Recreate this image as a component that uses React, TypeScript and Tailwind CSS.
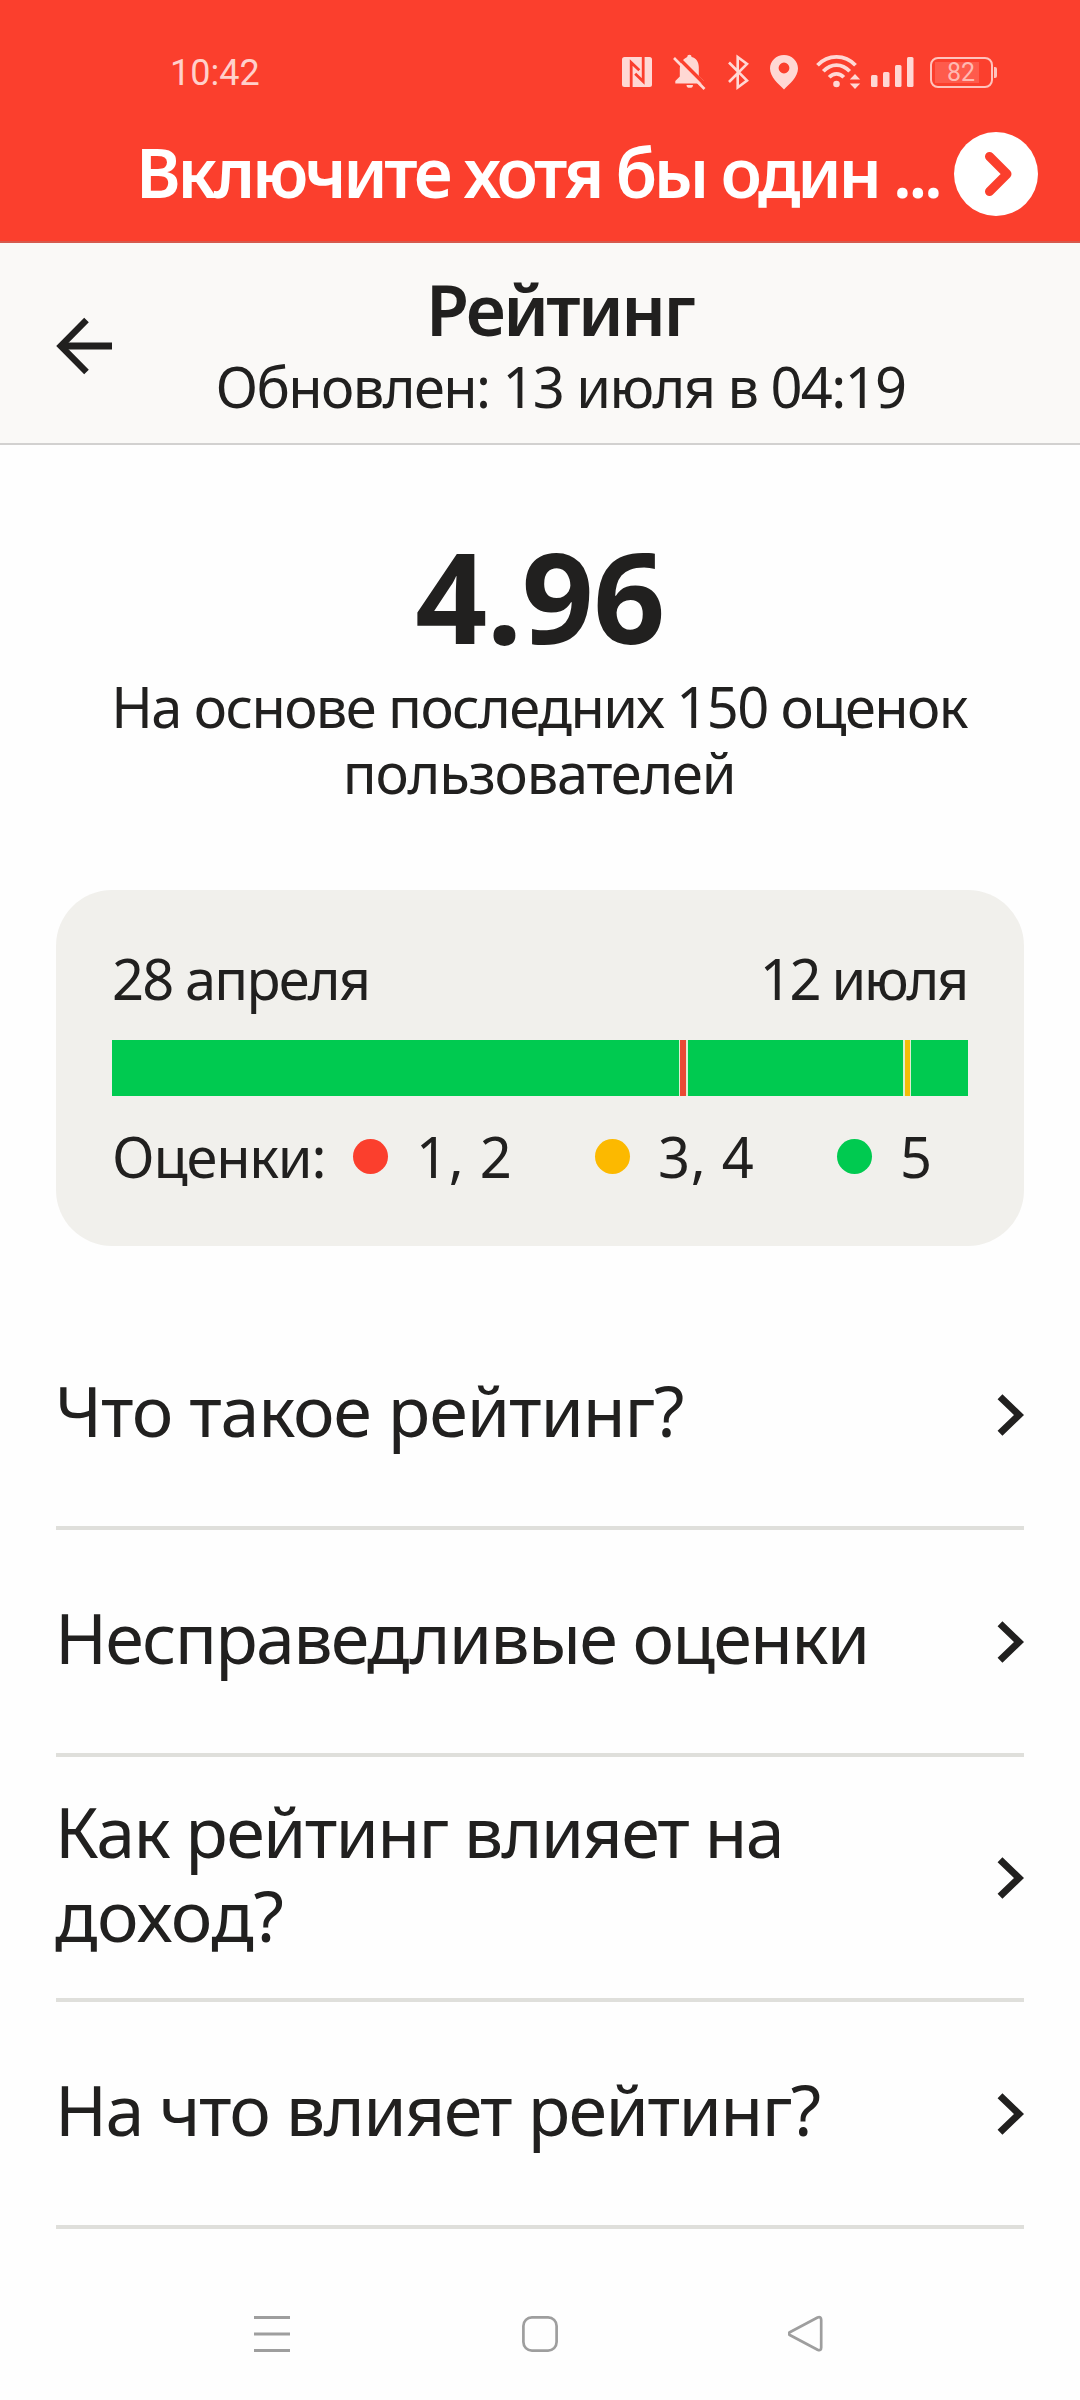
import type { ReactNode } from "react"

const questions = [
  { id: "what", lines: [{ text: "Что такое рейтинг?", spacing: "tracking-[-1.15px]" }] },
  { id: "unfair", lines: [{ text: "Несправедливые оценки", spacing: "tracking-[-1.8px]" }] },
  {
    id: "income",
    lines: [
      { text: "Как рейтинг влияет на", spacing: "tracking-[-1.75px]" },
      { text: "доход?", spacing: "tracking-[-0.4px]" },
    ],
  },
  { id: "effect", lines: [{ text: "На что влияет рейтинг?", spacing: "tracking-[-1.6px]" }] },
]

const legend = [
  { id: "bad", label: "1, 2", dot: "bg-[#fb3f2d]" },
  { id: "medium", label: "3, 4", dot: "bg-[#fcb900]" },
  { id: "good", label: "5", dot: "bg-[#00ca50]" },
]

function StatusIcon({ width, children }: { width: number; children: ReactNode }) {
  return (
    <svg width={width} height={40} viewBox={`0 0 ${width} 40`} fill="none" className="shrink-0 text-[#ffd8d4]">
      {children}
    </svg>
  )
}

function StatusBar() {
  return (
    <div className="flex items-center h-10 pl-[170px] pr-[83px]">
      <span className="pt-px font-['Roboto',sans-serif] text-[36px] leading-[42px] text-[#ffd0cb]">10:42</span>
      <div className="flex items-center ml-auto">
        {/* NFC */}
        <StatusIcon width={30}>
          <rect x="0" y="5" width="30" height="30" rx="2.5" fill="currentColor" />
          <path d="M9.2 35V10.5L17.3 18.3" stroke="#fb3f2d" strokeWidth="2.8" />
          <path d="M21.2 5V29.5L13.2 21.7" stroke="#fb3f2d" strokeWidth="2.8" />
        </StatusIcon>
        <div className="w-[21px]" />
        {/* Muted bell */}
        <StatusIcon width={34}>
          <path
            d="M14.2 5A2.2 2.2 0 0 1 18.6 5C23.2 6.2 25.8 10 25.8 15V24L30.5 28.5V31.5H2.3V29L6.8 24.5V17C6.8 12 9.6 7 14.2 5Z"
            fill="currentColor"
          />
          <path d="M13.5 33H20A3.2 2.8 0 0 1 13.5 33Z" fill="currentColor" />
          <path d="M3 3.5L34 34.5" stroke="#fb3f2d" strokeWidth="3.5" />
          <path d="M1 6L31.5 37" stroke="currentColor" strokeWidth="2.6" />
        </StatusIcon>
        <div className="w-[21px]" />
        {/* Bluetooth */}
        <StatusIcon width={21}>
          <path d="M1 10.5L19 28.5L9.7 35.5V5L19 12L1 30" stroke="currentColor" strokeWidth="2.6" />
        </StatusIcon>
        <div className="w-[21px]" />
        {/* Location */}
        <StatusIcon width={28}>
          <path
            fillRule="evenodd"
            d="M14 3C21.8 3 28 9 28 16.5C28 25 19.5 32 14 37.5C8.5 32 0 25 0 16.5C0 9 6.2 3 14 3ZM14 10.6A5.4 5.4 0 1 0 14 21.4A5.4 5.4 0 1 0 14 10.6Z"
            fill="currentColor"
          />
        </StatusIcon>
        <div className="w-[18px]" />
        {/* Wi-Fi */}
        <StatusIcon width={45}>
          <path d="M1.5 13.2C12 2 29 2 39.5 13.2" stroke="currentColor" strokeWidth="3.8" />
          <path d="M7.3 19.3C15 11 26 11 33.7 19.3" stroke="currentColor" strokeWidth="3.8" />
          <path d="M13.2 25.3C17.5 20.7 23.5 20.7 27.8 25.3" stroke="currentColor" strokeWidth="3.8" />
          <circle cx="20.5" cy="32" r="3.3" fill="currentColor" />
          <path d="M33.8 27.5L39 22L44.2 27.5Z" fill="currentColor" />
          <path d="M33.8 31.5L39 37L44.2 31.5Z" fill="currentColor" />
        </StatusIcon>
        <div className="w-[10px]" />
        {/* Signal */}
        <StatusIcon width={43}>
          <rect x="0" y="23" width="6.5" height="12" rx="1.5" fill="currentColor" />
          <rect x="12" y="20" width="6.5" height="15" rx="1.5" fill="currentColor" />
          <rect x="24" y="13" width="6.5" height="22" rx="1.5" fill="currentColor" />
          <rect x="36" y="5" width="6.5" height="30" rx="1.5" fill="currentColor" />
        </StatusIcon>
        {/* Battery */}
        <div className="flex items-center ml-4">
          <div className="flex items-center w-[63px] h-[31px] p-[3px] rounded-[8px] border-2 border-[#ffc3bd]">
            <div className="w-[44px] h-[21px] pl-3 bg-[#fe5b4c] font-['Roboto',sans-serif] text-[25px] leading-[22px] text-[#ffb9b2]">
              82
            </div>
          </div>
          <div className="w-[3px] h-[11px] ml-px rounded-r-[2px] bg-[#ffc3bd]" />
        </div>
      </div>
    </div>
  )
}

function Banner() {
  return (
    <div className="flex items-start justify-between h-[110px] mt-[40px] pl-[136px] pr-[42px]">
      <div className="text-[68px] leading-[79px] font-semibold tracking-[-3.32px] text-white whitespace-nowrap">
        Включите хотя бы один ...
      </div>
      <div className="flex items-center justify-center shrink-0 w-[84px] h-[84px] rounded-full bg-white">
        <svg width="84" height="84" viewBox="0 0 84 84" fill="none">
          <path d="M35.5 24.5L53 42L35.5 59.5" stroke="#fb3f2d" strokeWidth="9" strokeLinecap="round" strokeLinejoin="round" />
        </svg>
      </div>
    </div>
  )
}

function Header() {
  return (
    <header className="flex items-start h-[202px] pl-14 pr-[71px] bg-[#faf9f7] border-b-2 border-[#d2d1d0]">
      <svg width="56" height="58" viewBox="0 0 56 58" fill="none" className="shrink-0 mt-[74px]">
        <path d="M30.5 3L4.8 29L30.5 55" stroke="#21201f" strokeWidth="6.5" />
        <path d="M6 29H56" stroke="#21201f" strokeWidth="7" />
      </svg>
      <div className="flex-1 pt-[28px] text-center">
        <h1 className="pr-[2px] text-[70px] leading-[77px] font-semibold tracking-[-2.6px]">Рейтинг</h1>
        <p className="text-[56px] leading-[76px] tracking-[-1.6px] whitespace-nowrap">Обновлен: 13 июля в 04:19</p>
      </div>
    </header>
  )
}

function RatingCard() {
  return (
    <section className="h-[356px] mx-14 px-14 pt-[55px] rounded-[56px] bg-[#f1f0ec]">
      <div className="flex justify-between text-[56px] leading-[66px]">
        <span className="tracking-[-1.85px]">28 апреля</span>
        <span className="mr-px tracking-[-2.3px]">12 июля</span>
      </div>
      <div className="flex h-14 mt-[29px] bg-[#dcefd2]">
        <div className="w-[567px] bg-[#00ca50]" />
        <div className="w-[6px] ml-px mr-[2px] bg-[#ea4a34]" />
        <div className="w-[215px] bg-[#00ca50]" />
        <div className="w-[5px] ml-[2px] mr-px bg-[#f3bd0a]" />
        <div className="flex-1 bg-[#00ca50]" />
      </div>
      <div className="flex items-center mt-[27px] text-[56px] leading-[66px]">
        <span className="w-[241px] shrink-0 tracking-[-1.2px]">Оценки:</span>
        {legend.map((item) => (
          <div key={item.id} className="flex items-center shrink-0 w-[242px] last:w-auto">
            <span className={`w-[35px] h-[35px] shrink-0 mr-7 mt-px rounded-full ${item.dot}`} />
            <span className="tracking-[0.7px]">{item.label}</span>
          </div>
        ))}
      </div>
    </section>
  )
}

export default function App() {
  return (
    <div className="flex flex-col w-[1080px] h-[2400px] overflow-hidden bg-[#fefefe] font-['Noto_Sans',sans-serif] text-[#21201f]">
      <div className="pt-[52px] h-[243px] bg-[#fb3f2d] border-b-2 border-[#d65a4d]">
        <StatusBar />
        <Banner />
      </div>
      <Header />

      <main>
        <div className="pt-[87px] text-center">
          <div className="text-[126px] leading-[126px] font-bold tracking-[-0.5px]">4.96</div>
          <div className="mt-[15px] mb-[85px] pr-[2px] text-[56px] leading-[66px]">
            <p className="tracking-[-1.6px]">На основе последних 150 оценок</p>
            <p className="tracking-[-1.2px]">пользователей</p>
          </div>
        </div>

        <RatingCard />

        <ul className="mx-14 mt-[57px]">
          {questions.map((question) => (
            <li
              key={question.id}
              className="flex items-center justify-between min-h-[227px] pt-8 pb-[31px] border-b-4 border-[#dfdfdb]"
            >
              <div className="-ml-px pb-[10px] text-[70px] leading-[84px]">
                {question.lines.map((line) => (
                  <p key={line.text} className={line.spacing}>
                    {line.text}
                  </p>
                ))}
              </div>
              <svg width="27" height="42" viewBox="0 0 27 42" fill="none">
                <path d="M3 2.7L22 21L3 39.3" stroke="#21201f" strokeWidth="7" />
              </svg>
            </li>
          ))}
        </ul>
      </main>

      {/* System navigation */}
      <nav className="flex items-center mt-[86px] pl-[254px]">
        <svg width="36" height="38" viewBox="0 0 36 38" fill="none" stroke="#9e9e9e" strokeWidth="3">
          <path d="M0 2.5H36M0 19H36M0 35.5H36" />
        </svg>
        <svg width="36" height="38" viewBox="0 0 36 38" fill="none" stroke="#9e9e9e" strokeWidth="2.7" className="ml-[232px]">
          <rect x="1.4" y="2.4" width="33.2" height="33.2" rx="8.5" />
        </svg>
        <svg width="36" height="38" viewBox="0 0 36 38" fill="none" stroke="#9e9e9e" strokeWidth="2.7" className="ml-[230px]">
          <path d="M1.8 17.2L29.5 2.6Q33.2 1.2 33.2 5V32.5Q33.2 36.3 29.5 34.7L1.8 20Q-0.2 18.6 1.8 17.2Z" />
        </svg>
      </nav>
    </div>
  )
}
